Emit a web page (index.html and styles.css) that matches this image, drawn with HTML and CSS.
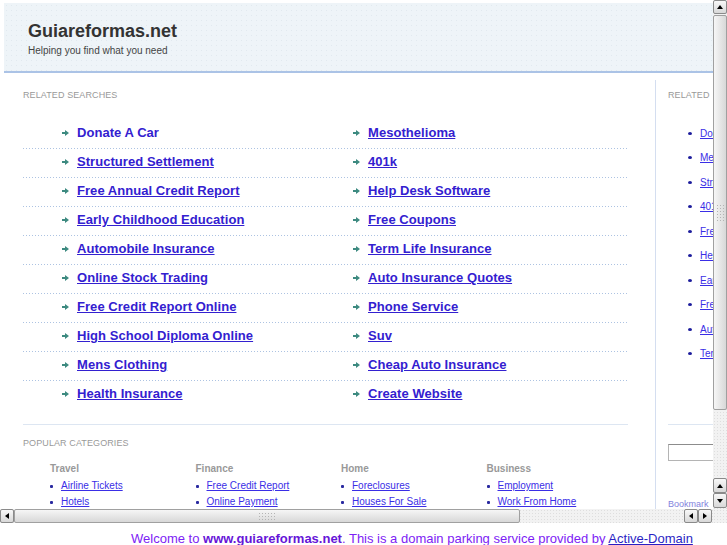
FILE: index.html
```html
<!DOCTYPE html>
<html lang="en">
<head>
  <meta charset="UTF-8" />
  <title>Guiareformas.net</title>
  <link rel="stylesheet" href="styles.css">
</head>
<body>

<div class="window">
  <div class="viewport">
    <div class="page">
      <div class="header">
        <h1>Guiareformas.net</h1>
        <p>Helping you find what you need</p>
      </div>

      <div class="main">
        <div class="content">
          <h3 class="label">Related Searches</h3>
          <ul class="searches">
            <li><svg viewBox="0 0 7 6" width="7" height="6"><path d="M0 2h3V0l4 3-4 3V4H0z"/></svg><a href="#" class="plain">Donate A Car</a></li>
            <li><svg viewBox="0 0 7 6" width="7" height="6"><path d="M0 2h3V0l4 3-4 3V4H0z"/></svg><a href="#">Mesothelioma</a></li>
            <li><svg viewBox="0 0 7 6" width="7" height="6"><path d="M0 2h3V0l4 3-4 3V4H0z"/></svg><a href="#">Structured Settlement</a></li>
            <li><svg viewBox="0 0 7 6" width="7" height="6"><path d="M0 2h3V0l4 3-4 3V4H0z"/></svg><a href="#">401k</a></li>
            <li><svg viewBox="0 0 7 6" width="7" height="6"><path d="M0 2h3V0l4 3-4 3V4H0z"/></svg><a href="#">Free Annual Credit Report</a></li>
            <li><svg viewBox="0 0 7 6" width="7" height="6"><path d="M0 2h3V0l4 3-4 3V4H0z"/></svg><a href="#">Help Desk Software</a></li>
            <li><svg viewBox="0 0 7 6" width="7" height="6"><path d="M0 2h3V0l4 3-4 3V4H0z"/></svg><a href="#">Early Childhood Education</a></li>
            <li><svg viewBox="0 0 7 6" width="7" height="6"><path d="M0 2h3V0l4 3-4 3V4H0z"/></svg><a href="#">Free Coupons</a></li>
            <li><svg viewBox="0 0 7 6" width="7" height="6"><path d="M0 2h3V0l4 3-4 3V4H0z"/></svg><a href="#">Automobile Insurance</a></li>
            <li><svg viewBox="0 0 7 6" width="7" height="6"><path d="M0 2h3V0l4 3-4 3V4H0z"/></svg><a href="#">Term Life Insurance</a></li>
            <li><svg viewBox="0 0 7 6" width="7" height="6"><path d="M0 2h3V0l4 3-4 3V4H0z"/></svg><a href="#">Online Stock Trading</a></li>
            <li><svg viewBox="0 0 7 6" width="7" height="6"><path d="M0 2h3V0l4 3-4 3V4H0z"/></svg><a href="#">Auto Insurance Quotes</a></li>
            <li><svg viewBox="0 0 7 6" width="7" height="6"><path d="M0 2h3V0l4 3-4 3V4H0z"/></svg><a href="#">Free Credit Report Online</a></li>
            <li><svg viewBox="0 0 7 6" width="7" height="6"><path d="M0 2h3V0l4 3-4 3V4H0z"/></svg><a href="#">Phone Service</a></li>
            <li><svg viewBox="0 0 7 6" width="7" height="6"><path d="M0 2h3V0l4 3-4 3V4H0z"/></svg><a href="#">High School Diploma Online</a></li>
            <li><svg viewBox="0 0 7 6" width="7" height="6"><path d="M0 2h3V0l4 3-4 3V4H0z"/></svg><a href="#">Suv</a></li>
            <li><svg viewBox="0 0 7 6" width="7" height="6"><path d="M0 2h3V0l4 3-4 3V4H0z"/></svg><a href="#">Mens Clothing</a></li>
            <li><svg viewBox="0 0 7 6" width="7" height="6"><path d="M0 2h3V0l4 3-4 3V4H0z"/></svg><a href="#">Cheap Auto Insurance</a></li>
            <li><svg viewBox="0 0 7 6" width="7" height="6"><path d="M0 2h3V0l4 3-4 3V4H0z"/></svg><a href="#">Health Insurance</a></li>
            <li><svg viewBox="0 0 7 6" width="7" height="6"><path d="M0 2h3V0l4 3-4 3V4H0z"/></svg><a href="#">Create Website</a></li>
          </ul>

          <div class="popular">
            <h3 class="label">Popular Categories</h3>
            <div class="cats">
              <div class="cat">
                <h4>Travel</h4>
                <ul>
                  <li><a href="#">Airline Tickets</a></li>
                  <li><a href="#">Hotels</a></li>
                </ul>
              </div>
              <div class="cat">
                <h4>Finance</h4>
                <ul>
                  <li><a href="#">Free Credit Report</a></li>
                  <li><a href="#">Online Payment</a></li>
                </ul>
              </div>
              <div class="cat">
                <h4>Home</h4>
                <ul>
                  <li><a href="#">Foreclosures</a></li>
                  <li><a href="#">Houses For Sale</a></li>
                </ul>
              </div>
              <div class="cat">
                <h4>Business</h4>
                <ul>
                  <li><a href="#">Employment</a></li>
                  <li><a href="#">Work From Home</a></li>
                </ul>
              </div>
            </div>
          </div>
        </div>

        <div class="sidebar">
          <h3 class="label">Related</h3>
          <ul class="side-list">
            <li><a href="#">Donate A Car</a></li>
            <li><a href="#">Mesothelioma</a></li>
            <li><a href="#">Structured Settlement</a></li>
            <li><a href="#">401k</a></li>
            <li><a href="#">Free Annual Credit Report</a></li>
            <li><a href="#">Help Desk Software</a></li>
            <li><a href="#">Early Childhood Education</a></li>
            <li><a href="#">Free Coupons</a></li>
            <li><a href="#">Automobile Insurance</a></li>
            <li><a href="#">Term Life Insurance</a></li>
          </ul>
          <div class="side-rule"></div>
          <input class="search-box" type="text">
          <a href="#" class="bookmark">Bookmark</a>
        </div>
      </div>
    </div>
  </div>

  <div class="vscroll">
    <div class="sb-btn"><svg viewBox="0 0 6 4" width="6" height="4"><path d="M0 4L3 0 6 4z"/></svg></div>
    <div class="thumb thumb-v"><div class="grip grip-v"></div></div>
    <div class="track"></div>
    <div class="sb-btn tall"><svg viewBox="0 0 6 4" width="6" height="4"><path d="M0 4L3 0 6 4z"/></svg></div>
    <div class="sb-btn tall"><svg viewBox="0 0 6 4" width="6" height="4"><path d="M0 0L3 4 6 0z"/></svg></div>
  </div>

  <div class="hscroll">
    <div class="sb-btn"><svg viewBox="0 0 4 6" width="4" height="6"><path d="M4 0L0 3 4 6z"/></svg></div>
    <div class="thumb thumb-h"><div class="grip grip-h"></div></div>
    <div class="track"></div>
    <div class="sb-btn"><svg viewBox="0 0 4 6" width="4" height="6"><path d="M4 0L0 3 4 6z"/></svg></div>
    <div class="sb-btn"><svg viewBox="0 0 4 6" width="4" height="6"><path d="M0 0L4 3 0 6z"/></svg></div>
  </div>

  <div class="corner"></div>

  <div class="footer">
    Welcome to <b>www.guiareformas.net</b>. This is a domain parking service provided by <a href="#">Active-Domain</a>
  </div>
</div>

</body>
</html>
```

FILE: styles.css
```css
body {
  margin: 0;
  font-family: 'Liberation Sans', Arial, sans-serif;
  background: #fff;
  overflow: hidden;
}

.window {
  display: grid;
  grid-template-columns: 713px 14px;
  grid-template-rows: 509px 14px 22px;
  width: 727px;
  height: 545px;
}

.viewport {
  overflow: hidden;
}

.page {
  width: 943px;
}

/* header */

.header {
  box-sizing: border-box;
  height: 70px;
  margin: 3px 0 0 4px;
  padding: 18px 0 0 24px;
  border-bottom: 2px solid #abc3e6;
  background-color: #eef4f8;
  background-image: radial-gradient(#e1e9ef 0.7px, transparent 0.9px);
  background-size: 5px 5px;
}

.header h1 {
  margin: 0;
  font-size: 18px;
  line-height: 20px;
  color: #333;
}

.header p {
  margin: 4px 0 0;
  font-size: 10px;
  line-height: 12px;
  color: #444;
}

/* main area */

.main {
  display: flex;
  padding-top: 7px;
}

.content {
  width: 605px;
  margin-left: 23px;
}

.label {
  margin: 10px 0 0;
  font-size: 9px;
  line-height: 11px;
  font-weight: normal;
  text-transform: uppercase;
  letter-spacing: 0.1px;
  color: #999;
}

.searches {
  display: grid;
  grid-template-columns: 291px 314px;
  list-style: none;
  margin: 19px 0 0;
  padding: 0;
}

.searches li {
  display: flex;
  align-items: center;
  gap: 8px;
  padding: 5px 0 8px 39px;
  line-height: 16px;
  background-image: linear-gradient(to right, #adc3e2 1px, transparent 1px);
  background-size: 3px 1px;
  background-repeat: repeat-x;
  background-position: left bottom;
}

.searches li:nth-last-child(-n+2) {
  background: none;
}

.searches svg {
  fill: #3d8a80;
  flex: none;
}

.searches a {
  font-size: 13px;
  font-weight: bold;
  letter-spacing: 0.05px;
  color: #3320d0;
}

.searches a.plain {
  text-decoration: none;
}

.popular {
  margin-top: 14px;
  border-top: 1px solid #dde6f2;
}

.popular .label {
  margin-top: 13px;
}

.cats {
  display: grid;
  grid-template-columns: repeat(4, 145.5px);
  margin-top: 14px;
  padding-left: 27px;
}

.cat h4 {
  margin: 0;
  font-size: 10px;
  line-height: 12px;
  color: #999;
}

.cat ul {
  list-style: none;
  margin: 3px 0 0;
  padding: 0;
}

.cat li {
  display: flex;
  align-items: center;
  gap: 8px;
  font-size: 10px;
  line-height: 16px;
  white-space: nowrap;
}

.cat li::before {
  content: "";
  width: 3px;
  height: 3px;
  border-radius: 1px;
  background: #2a2aa0;
}

.cat a {
  color: #3a2ee6;
}

/* right column */

.sidebar {
  width: 260px;
  margin-left: 27px;
  padding-left: 12px;
  border-left: 1px solid #d4def0;
}

.side-list {
  list-style: none;
  margin: 20px 0 0;
  padding: 0 0 0 20px;
}

.side-list li {
  display: flex;
  align-items: center;
  gap: 8px;
  height: 24.5px;
  font-size: 10px;
  white-space: nowrap;
}

.side-list li::before {
  content: "";
  width: 4px;
  height: 3px;
  border-radius: 50%;
  background: #1c1c9c;
}

.side-list a {
  color: #3a2ee6;
}

.side-rule {
  margin-top: 58px;
  border-top: 1px solid #dde6f2;
}

.search-box {
  display: block;
  box-sizing: border-box;
  width: 150px;
  height: 17px;
  margin: 19px 0 0;
  padding: 0;
  border: 1px solid #b4b4b4;
  border-top-color: #8c8c8c;
  border-radius: 0;
}

.bookmark {
  display: block;
  margin-top: 38px;
  font-size: 9px;
  line-height: 11px;
  color: #8282dc;
  text-decoration: none;
  white-space: nowrap;
}

/* scrollbars */

.vscroll,
.hscroll,
.corner {
  display: flex;
  background-color: #f2f2f2;
  background-image: radial-gradient(#dedede 0.6px, transparent 0.8px);
  background-size: 3px 3px;
}

.vscroll {
  flex-direction: column;
}

.sb-btn {
  flex: none;
  display: flex;
  align-items: center;
  justify-content: center;
  box-sizing: border-box;
  width: 14px;
  height: 14px;
  border: 1px solid #8a8a8a;
  border-radius: 2px;
  background: linear-gradient(#f8f8f8, #d8d8d8);
}

.sb-btn.tall {
  height: 15px;
}

.sb-btn svg {
  fill: #000;
}

.track {
  flex: 1;
}

.thumb {
  flex: none;
  display: flex;
  align-items: center;
  justify-content: center;
  box-sizing: border-box;
  border: 1px solid #a0a0a0;
  border-radius: 2px;
}

.thumb-v {
  height: 395px;
  margin-top: 1px;
  background: linear-gradient(to right, #f6f6f6, #d8d8d8);
}

.vscroll .sb-btn:last-child {
  margin-bottom: 1px;
}

.thumb-h {
  width: 506px;
  background: linear-gradient(#f6f6f6, #d8d8d8);
}

.hscroll .sb-btn:last-child {
  margin-right: 1px;
}

.grip {
  background-image: radial-gradient(#b4b4b4 0.6px, transparent 0.8px);
  background-size: 3px 3px;
}

.grip-h {
  width: 18px;
  height: 9px;
}

.grip-v {
  width: 9px;
  height: 18px;
}

/* footer */

.footer {
  grid-column: 1 / 3;
  box-sizing: border-box;
  height: 22px;
  overflow: hidden;
  padding: 8px 0 0 131px;
  font-size: 13px;
  line-height: 16px;
  color: #7d22f5;
  white-space: nowrap;
}

.footer b {
  color: #6615d8;
}

.footer a {
  color: #2b1fc4;
}
```
